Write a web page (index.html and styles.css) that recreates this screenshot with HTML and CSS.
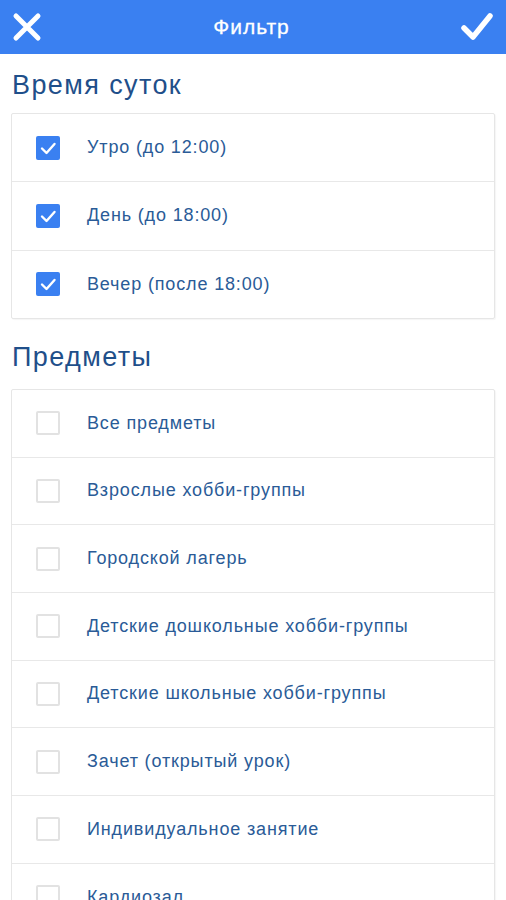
FILE: index.html
```html
<!DOCTYPE html>
<html lang="ru">
<head>
<meta charset="utf-8">
<link rel="stylesheet" href="styles.css">
</head>
<body>
<header class="topbar">
  <svg class="icon" viewBox="0 0 32 32" width="32" height="32"><path d="M5 5 L27 27 M27 5 L5 27" stroke="#fff" stroke-width="5" stroke-linecap="round" fill="none"/></svg>
  <div class="title">Фильтр</div>
  <svg class="icon" viewBox="0 0 34 32" width="34" height="32"><path d="M4 17 L13 26 L30 5" stroke="#fff" stroke-width="5.5" stroke-linecap="round" stroke-linejoin="round" fill="none"/></svg>
</header>
<main class="content">
  <h2 class="section-title">Время суток</h2>
  <div class="card time">
    <div class="row"><span class="box checked"><svg viewBox="0 0 24 24" width="24" height="24"><path d="M6 12.5 L10.5 17 L18.5 8" stroke="#fff" stroke-width="2.4" stroke-linecap="round" stroke-linejoin="round" fill="none"/></svg></span><span class="label">Утро (до 12:00)</span></div>
    <div class="row"><span class="box checked"><svg viewBox="0 0 24 24" width="24" height="24"><path d="M6 12.5 L10.5 17 L18.5 8" stroke="#fff" stroke-width="2.4" stroke-linecap="round" stroke-linejoin="round" fill="none"/></svg></span><span class="label">День (до 18:00)</span></div>
    <div class="row"><span class="box checked"><svg viewBox="0 0 24 24" width="24" height="24"><path d="M6 12.5 L10.5 17 L18.5 8" stroke="#fff" stroke-width="2.4" stroke-linecap="round" stroke-linejoin="round" fill="none"/></svg></span><span class="label">Вечер (после 18:00)</span></div>
  </div>
  <h2 class="section-title second">Предметы</h2>
  <div class="card">
    <div class="row"><span class="box"></span><span class="label">Все предметы</span></div>
    <div class="row"><span class="box"></span><span class="label">Взрослые хобби-группы</span></div>
    <div class="row"><span class="box"></span><span class="label">Городской лагерь</span></div>
    <div class="row"><span class="box"></span><span class="label">Детские дошкольные хобби-группы</span></div>
    <div class="row"><span class="box"></span><span class="label">Детские школьные хобби-группы</span></div>
    <div class="row"><span class="box"></span><span class="label">Зачет (открытый урок)</span></div>
    <div class="row"><span class="box"></span><span class="label">Индивидуальное занятие</span></div>
    <div class="row"><span class="box"></span><span class="label">Кардиозал</span></div>
  </div>
</main>
</body>
</html>
```
FILE: styles.css
```css
html, body {
  margin: 0;
  padding: 0;
  background: #ffffff;
  font-family: "Liberation Sans", Arial, sans-serif;
  overflow: hidden;
}
.topbar {
  height: 54px;
  background: #3a80f1;
  display: flex;
  align-items: center;
  justify-content: space-between;
  padding: 0 12px 0 11px;
  box-sizing: border-box;
}
.icon { display: block; }
.title {
  color: #ffffff;
  font-size: 21px;
  letter-spacing: 1px;
  -webkit-text-stroke: 0.3px #ffffff;
}
.content {
  padding: 0 11px 0 11px;
}
.section-title {
  margin: 0;
  font-weight: normal;
  font-size: 27px;
  letter-spacing: 1.4px;
  color: #1f4f8a;
  height: 59px;
  line-height: 62px;
  padding-left: 1px;
}
.section-title.second {
  height: 70px;
  line-height: 76px;
}
.card {
  border: 1px solid #e6e6e6;
  border-radius: 2px;
  box-shadow: 1px 1px 1px rgba(0,0,0,0.04);
}
.row {
  height: 66.7px;
  display: flex;
  align-items: center;
  border-bottom: 1px solid #e8e8e8;
  padding-left: 24px;
}
.card.time .row { height: 67.3px; }
.row:last-child { border-bottom: none; }
.box {
  width: 24px;
  height: 24px;
  box-sizing: border-box;
  border: 2px solid #e2e2e2;
  border-radius: 2px;
  flex: none;
}
.box.checked {
  background: #3a80f1;
  border: none;
}
.box svg { display: block; }
.label {
  margin-left: 27px;
  font-size: 18px;
  letter-spacing: 0.85px;
  color: #2a5b97;
  white-space: nowrap;
}
```
